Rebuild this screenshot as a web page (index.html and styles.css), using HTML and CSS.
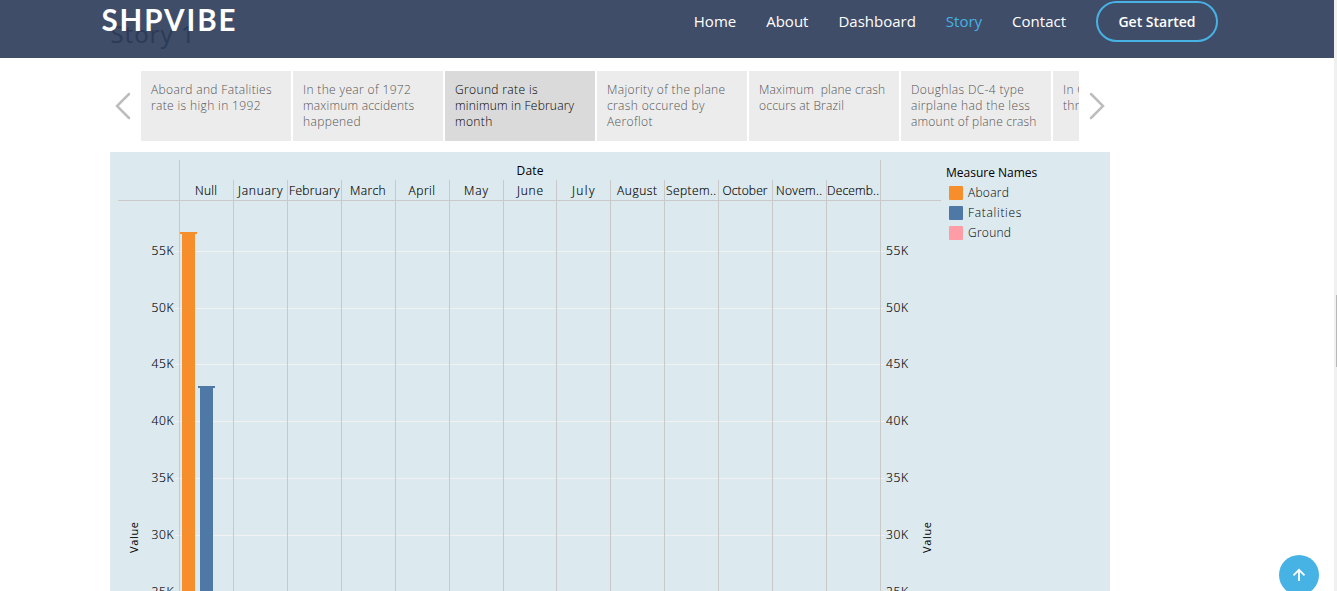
FILE: index.html
```
<!DOCTYPE html>
<html lang="en">
<head>
<meta charset="utf-8">
<title>SHPVIBE</title>
<link rel="stylesheet" href="styles.css">
</head>
<body>
<div class="page">
  <header class="header">
    <svg class="brand" width="200" height="58" viewBox="0 0 200 58">
      <text class="ghost-title" x="10.500" y="43" textLength="84">Story 1</text>
      <text class="logo" x="1.500" y="31" textLength="134">SHPVIBE</text>
    </svg>
    <nav class="nav">
      <a>Home</a><a>About</a><a>Dashboard</a><a class="current">Story</a><a>Contact</a>
      <a class="cta">Get Started</a>
    </nav>
  </header>
  <main class="story">
    <section class="navigator">
      <svg class="arrow" width="31" height="70" viewBox="0 0 31 70"><path d="M19 23L7 35L19 47"/></svg>
      <div class="points">
        <div class="point">Aboard and Fatalities<br>rate is high in 1992</div>
        <div class="point">In the year of 1972<br><span class="tight">maximum accidents</span><br>happened</div>
        <div class="point active">Ground rate is<br><span class="tight">minimum in February</span><br>month</div>
        <div class="point">Majority of the plane<br>crash occured by<br>Aeroflot</div>
        <div class="point"><span class="tight">Maximum&nbsp; plane crash</span><br><span class="tight">occurs at Brazil</span></div>
        <div class="point">Doughlas DC-4 type<br>airplane had the less<br><span class="tight">amount of plane crash</span></div>
        <div class="point">In Canada<br>three</div>
      </div>
      <svg class="arrow" width="31" height="70" viewBox="0 0 31 70"><path d="M12 23L24 35L12 47"/></svg>
    </section>
    <section class="viz">
      <svg class="chart" width="836" height="439" viewBox="110 152 836 439">
        <path class="grid" d="M175 251.500H885M175 308.500H885M175 364.500H885M175 421.500H885M175 478.500H885M175 535.500H885"/>
        <path class="rule" d="M118 200.500H941M179.500 160V591M880.500 160V591M233.500 180V591M287.500 180V591M341.500 180V591M395.500 180V591M449.500 180V591M503.500 180V591M556.500 180V591M610.500 180V591M664.500 180V591M718.500 180V591M772.500 180V591M826.500 180V591"/>
        <path class="aboard" d="M180 232H197V234H195V591H182V234H180Z"/>
        <path class="fatal" d="M198 386H215V388H213V591H200V388H198Z"/>
        <text class="strong" x="516.500" y="175" textLength="27">Date</text>
        <g class="label">
          <text x="195" y="195" textLength="22">Null</text>
          <text x="238" y="195" textLength="44.500">January</text>
          <text x="289" y="195" textLength="50.500">February</text>
          <text x="350" y="195" textLength="35.500">March</text>
          <text x="408.500" y="195" textLength="26.500">April</text>
          <text x="464" y="195" textLength="24">May</text>
          <text x="517" y="195" textLength="26">June</text>
          <text x="572" y="195" textLength="22.500">July</text>
          <text x="617" y="195" textLength="40">August</text>
          <text x="666" y="195" textLength="50">Septem..</text>
          <text x="722.500" y="195" textLength="45">October</text>
          <text x="776" y="195" textLength="46">Novem..</text>
          <text x="827" y="195" textLength="52">Decemb..</text>
          <text x="151.500" y="255" textLength="22">55K</text><text x="886" y="255" textLength="22">55K</text>
          <text x="151.500" y="312" textLength="22">50K</text><text x="886" y="312" textLength="22">50K</text>
          <text x="151.500" y="368" textLength="22">45K</text><text x="886" y="368" textLength="22">45K</text>
          <text x="151.500" y="425" textLength="22">40K</text><text x="886" y="425" textLength="22">40K</text>
          <text x="151.500" y="482" textLength="22">35K</text><text x="886" y="482" textLength="22">35K</text>
          <text x="151.500" y="539" textLength="22">30K</text><text x="886" y="539" textLength="22">30K</text>
          <text x="151.500" y="596" textLength="22">25K</text><text x="886" y="596" textLength="22">25K</text>
        </g>
        <text class="axis" transform="translate(138 553) rotate(-90)" textLength="31">Value</text>
        <text class="axis" transform="translate(931 553) rotate(-90)" textLength="31">Value</text>
      </svg>
      <aside class="legend">
        <div class="legend-title">Measure Names</div>
        <div class="entry"><i class="swatch orange"></i>Aboard</div>
        <div class="entry wide"><i class="swatch blue"></i>Fatalities</div>
        <div class="entry"><i class="swatch pink"></i>Ground</div>
      </aside>
    </section>
  </main>
  <a class="to-top"><svg width="40" height="40" viewBox="0 0 40 40"><path d="M20 26V15M14.500 20.300L20 14.800L25.500 20.300"/></svg></a>
</div>
<div class="scrollbar"><div class="thumb"></div></div>
</body>
</html>
```
FILE: styles.css
```
* { box-sizing: border-box; }
body {
  margin: 0;
  height: 591px;
  display: flex;
  overflow: hidden;
  background: #fff;
  font-family: "Open Sans", "Noto Sans", sans-serif;
}
.page { width: 1334px; height: 591px; overflow: hidden; }
.header {
  height: 58px;
  padding: 0 116px 0 100px;
  display: flex;
  justify-content: space-between;
  align-items: flex-start;
  background: #3f4d69;
}
.brand { display: block; }
.logo { font: 700 29.5px Lato, sans-serif; fill: #fff; }
.ghost-title { font: 400 24px "Noto Sans", sans-serif; fill: #2c3b58; }
.nav {
  display: flex;
  align-items: flex-start;
  padding-top: 1px;
  gap: 30px;
  color: #fff;
  font-size: 15px;
  font-weight: 500;
  line-height: 41px;
}
.current { color: #47b2e4; }
.cta {
  width: 122px;
  height: 41px;
  border: 2px solid #47b2e4;
  border-radius: 21px;
  font-size: 14px;
  font-weight: 600;
  line-height: 37px;
  text-align: center;
}
.story { width: 1000px; margin-left: 110px; padding-top: 13px; }
.navigator { display: flex; height: 70px; }
.arrow { flex: none; fill: none; stroke: #bdbdbd; stroke-width: 2.5; stroke-linecap: round; }
.points { display: flex; gap: 2px; width: 938px; overflow: hidden; }
.point {
  flex: none;
  width: 150px;
  height: 70px;
  padding: 11px 0 0 10px;
  background: #ececec;
  color: #555;
  font-size: 12px;
  font-weight: 300;
  letter-spacing: .36px;
  line-height: 16px;
  white-space: nowrap;
}
.tight { letter-spacing: .2px; }
.active { background: #dadada; color: #000; }
.viz { display: flex; height: 439px; margin-top: 11px; background: #dce9ee; overflow: hidden; }
.chart { flex: none; display: block; }
.grid { stroke: #f2f2f2; fill: none; shape-rendering: crispEdges; }
.rule { stroke: #c9c9c9; fill: none; shape-rendering: crispEdges; }
.aboard { fill: #f58e2b; }
.fatal { fill: #4e79a7; }
.label { font-size: 12px; font-weight: 300; fill: #000; stroke: #000; stroke-width: .15; }
.strong { font-size: 12px; }
.axis { font-size: 11px; }
.legend { padding-top: 11px; font-size: 12px; line-height: 20px; color: #000; white-space: nowrap; }
.legend-title { letter-spacing: 0; }
.entry { display: flex; align-items: center; padding-left: 3px; font-weight: 300; letter-spacing: .25px; }
.wide { letter-spacing: .7px; }
.swatch { width: 14px; height: 14px; margin-right: 5px; border-radius: 1px; }
.orange { background: #f58e2b; }
.blue { background: #4e79a7; }
.pink { background: #ff9da7; }
.to-top {
  position: absolute;
  left: 1279px;
  top: 555px;
  width: 40px;
  height: 36px;
  overflow: hidden;
}
.to-top svg { display: block; border-radius: 50%; background: #47b2e4; fill: none; stroke: #fff; stroke-width: 1.800; }
.scrollbar { width: 3px; height: 591px; padding: 295px 0 0 2px; background: #f0f0f0; }
.thumb { height: 72px; background: #b8b8b8; }
```
